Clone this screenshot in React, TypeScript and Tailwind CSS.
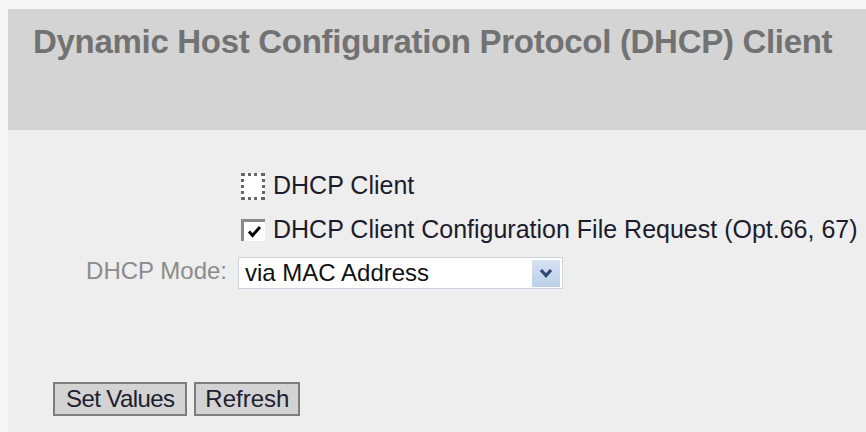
import { useState } from 'react'

export default function App() {
  const [dhcpClient, setDhcpClient] = useState(false)
  const [fileRequest, setFileRequest] = useState(true)

  return (
    <div
      className="w-[866px] h-[432px] bg-[#f7f7f7] pl-[8px] pt-[9px] overflow-hidden"
      style={{ fontFamily: '"Liberation Sans", Arial, sans-serif' }}
    >
      <div className="h-[121px] bg-[#d4d4d4] pl-[25px] pt-[16px]">
        <h1 className="text-[33px] font-bold text-[#727272] leading-[33px] tracking-[-0.3px] whitespace-nowrap">
          Dynamic Host Configuration Protocol (DHCP) Client
        </h1>
      </div>

      <div className="h-[302px] bg-[#eeeeee] pt-[34px]">
        <div className="grid grid-cols-[219px_auto] gap-x-[11px] items-center">
          <div />
          <label className="flex items-center gap-[8px] h-[44px] pl-[3px] text-[25px] text-[#1c1c2c] whitespace-nowrap">
            <span
              onClick={() => setDhcpClient(!dhcpClient)}
              className="w-[24px] h-[27px] border-[3px] border-dotted border-[#666] bg-white flex items-center justify-center"
            >
              {dhcpClient && <CheckMark />}
            </span>
            DHCP Client
          </label>

          <div />
          <label className="flex items-center gap-[8px] h-[44px] pl-[3px] text-[25px] text-[#1c1c2c] whitespace-nowrap">
            <span
              onClick={() => setFileRequest(!fileRequest)}
              className="w-[24px] h-[22px] border-t-[3px] border-l-[3px] border-[#8a8a8a] bg-white flex items-center justify-center"
            >
              {fileRequest && <CheckMark />}
            </span>
            DHCP Client Configuration File Request (Opt.66, 67)
          </label>

          <span className="text-right text-[24px] text-[#8c8c8c] whitespace-nowrap">DHCP Mode:</span>
          <div className="w-[325px] h-[32px] bg-white border border-[#cbd3de] flex items-center justify-between mt-[5px]">
            <span className="pl-[6px] text-[24px] text-[#111] whitespace-nowrap">via MAC Address</span>
            <span className="w-[28px] h-[27px] mr-[2px] bg-gradient-to-b from-[#d6e2f3] to-[#bccfe9] flex items-center justify-center">
              <svg width="14" height="10" viewBox="0 0 14 10">
                <path d="M2 2 L7 7.5 L12 2" fill="none" stroke="#2e4a72" strokeWidth="3.2" />
              </svg>
            </span>
          </div>
        </div>

        <div className="flex gap-[7px] pl-[45px] mt-[93px]">
          <button className="h-[34px] px-[11px] bg-[#d3d3d3] border-2 border-[#7d7d7d] text-[24px] text-[#202030] leading-none tracking-[-0.6px]">
            Set Values
          </button>
          <button className="h-[34px] px-[9px] bg-[#d3d3d3] border-2 border-[#7d7d7d] text-[24px] text-[#202030] leading-none">
            Refresh
          </button>
        </div>
      </div>
    </div>
  )
}

function CheckMark() {
  return (
    <svg width="15" height="13" viewBox="0 0 15 13">
      <path d="M2 6.5 L5.5 10.5 L13 2" fill="none" stroke="#000" strokeWidth="3" />
    </svg>
  )
}
